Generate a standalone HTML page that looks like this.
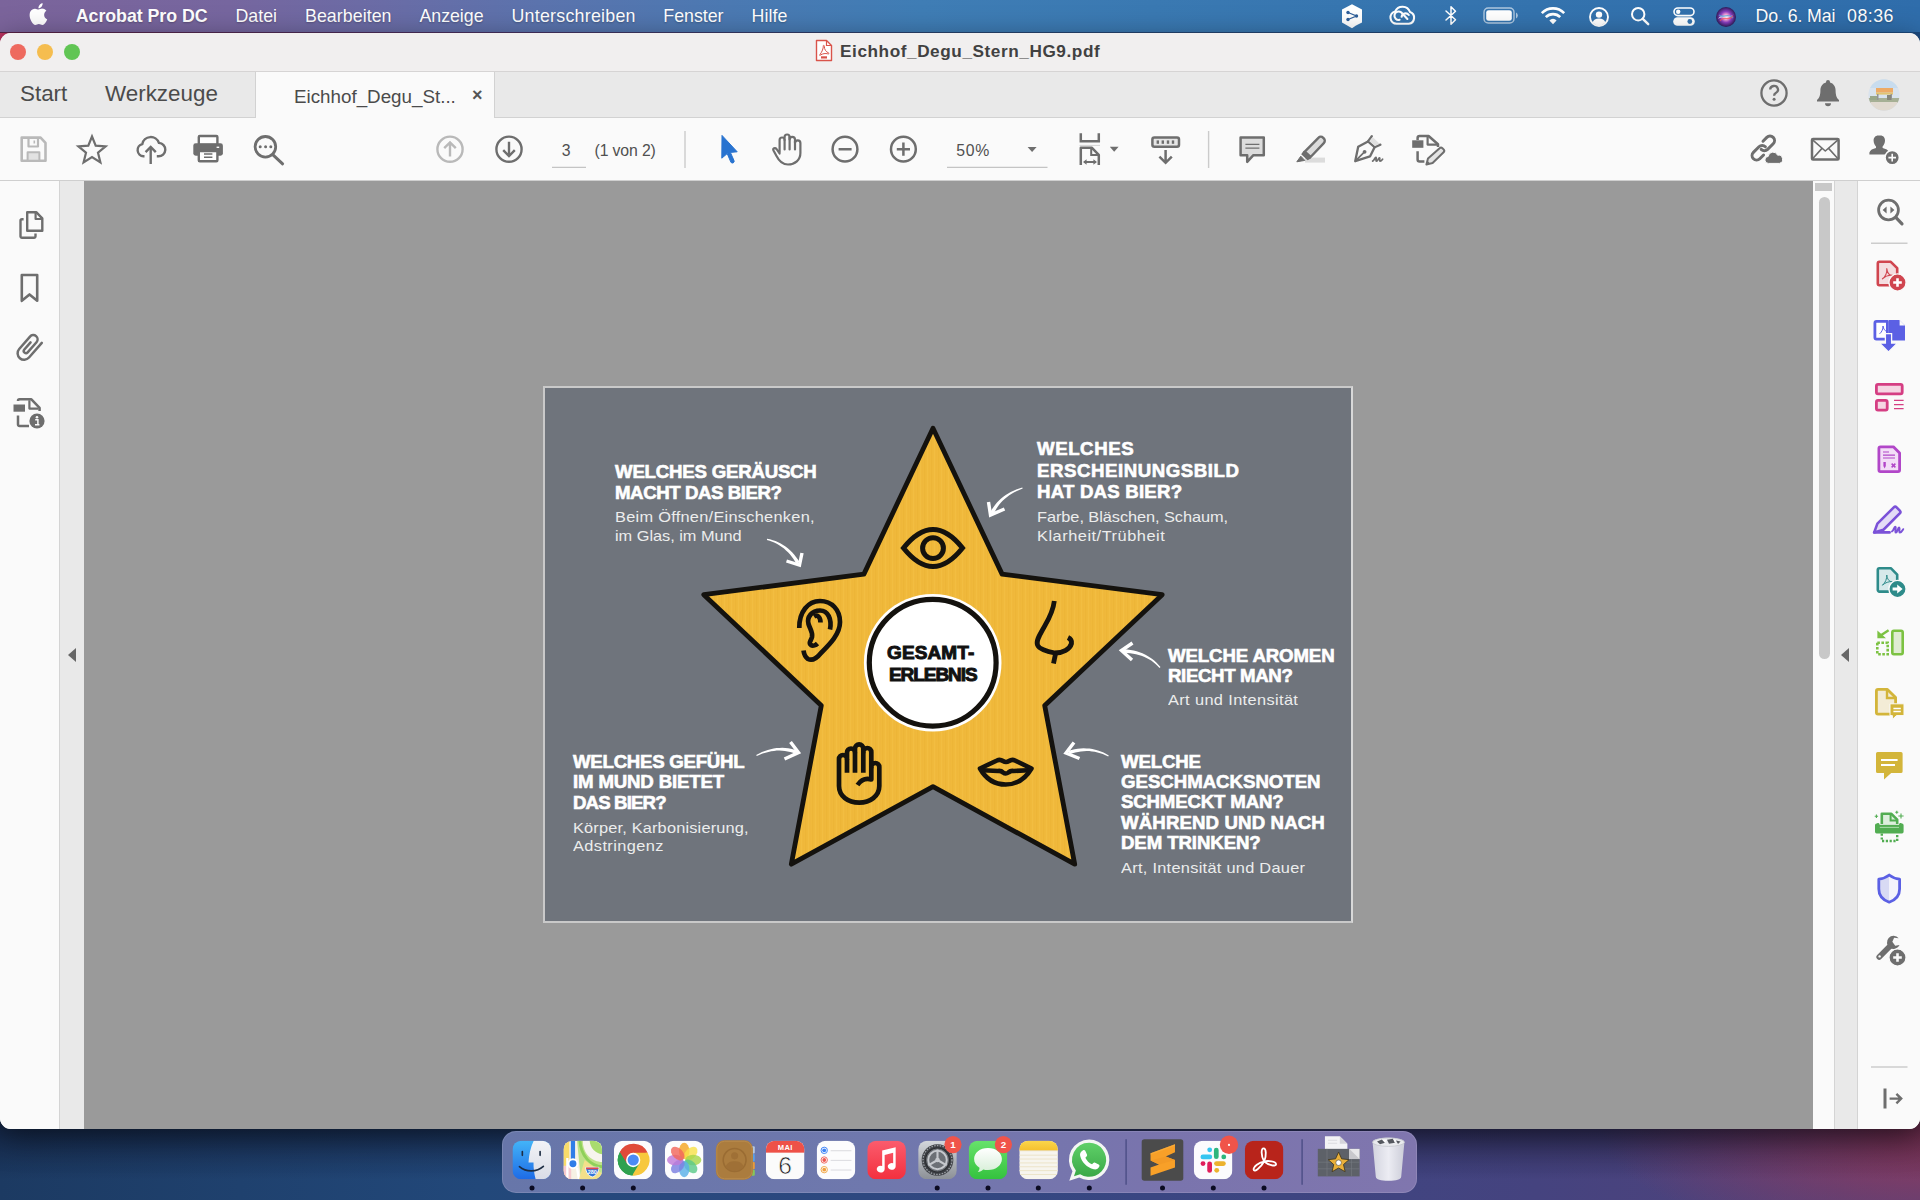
<!DOCTYPE html>
<html lang="de">
<head>
<meta charset="utf-8">
<title>Eichhof_Degu_Stern_HG9.pdf</title>
<style>
*{box-sizing:border-box;margin:0;padding:0}
html,body{width:1920px;height:1200px;overflow:hidden}
body{position:relative;font-family:"Liberation Sans",sans-serif;background:#27436f;}
.abs{position:absolute}
#desk{left:0;top:0;width:1920px;height:1200px;
 background:
  radial-gradient(ellipse 330px 120px at 1930px 1128px,rgba(160,55,85,.85),rgba(160,55,85,0) 100%),
  linear-gradient(90deg,#1c3a62 0%,#22487a 25%,#2e4880 45%,#3a4682 60%,#45437f 80%,#54427a 100%);}
#deskfade{left:0;top:1120px;width:1920px;height:80px;background:linear-gradient(180deg,rgba(10,10,30,.45) 0,rgba(10,10,30,.28) 22px,rgba(10,10,30,0) 60px)}
#menubar{left:0;top:0;width:1920px;height:32px;color:#fff;font-size:17px;
 background:linear-gradient(90deg,#7b649b 0%,#76669f 12%,#6a6ca6 20%,#5b73ad 28%,#4b79b2 38%,#3f7db5 48%,#3a79b2 60%,#3473ae 80%,#2f6dab 100%);}
#menubar span{position:absolute;top:6px;line-height:20px;white-space:nowrap;text-shadow:0 1px 2px rgba(0,0,0,.25)}
#win{left:0;top:33px;width:1920px;height:1096px;border-radius:11px 11px 11px 11px;overflow:hidden;background:#fafafa;box-shadow:0 8px 30px rgba(0,0,0,.5)}
#titlebar{left:0;top:0;width:1920px;height:39px;background:#f1efef;border-bottom:1px solid #d6d4d4}
.tl{position:absolute;top:11px;width:16px;height:16px;border-radius:50%}
#title{left:840px;top:7.8px;font-weight:bold;font-size:17.2px;line-height:20px;color:#414141;white-space:nowrap;letter-spacing:.57px}
#tabbar{left:0;top:39px;width:1920px;height:46px;background:#e9e9e9;border-bottom:1px solid #d2d2d2}
#tabbar .nav{position:absolute;top:7.5px;font-size:22.4px;line-height:28px;color:#4b4b4b;white-space:nowrap}
#tab{left:255px;top:0px;width:240px;height:47px;background:#fafafa;border-left:1px solid #d2d2d2;border-right:1px solid #d2d2d2}
#tab .t{position:absolute;left:38px;top:12.5px;font-size:18.8px;line-height:24px;color:#4b4b4b;white-space:nowrap}
#tab .x{position:absolute;left:216px;top:10.5px;font-size:18px;line-height:24px;color:#555;font-weight:bold}
#toolbar{left:0;top:85px;width:1920px;height:63px;background:#fafafa;border-bottom:1px solid #cfcfcf}
#toolbar .txt{position:absolute;font-size:16px;line-height:20px;color:#505050;white-space:nowrap}
.ic{position:absolute;overflow:visible}
#lside{left:0;top:148px;width:60px;height:948px;background:#fafafa;border-right:1px solid #d4d4d4}
#lstrip{left:60px;top:148px;width:24px;height:948px;background:#e9e9e9}
#doc{left:84px;top:148px;width:1729px;height:948px;background:#9a9a9a}
#vscroll{left:1813px;top:148px;width:21px;height:948px;background:#fafafa}
#rstrip{left:1834px;top:148px;width:24px;height:948px;background:#e9e9e9;border-left:1px solid #d4d4d4;border-right:1px solid #d4d4d4}
#rside{left:1858px;top:148px;width:62px;height:948px;background:#fafafa}
#page{left:543px;top:386px;width:810px;height:537px;background:#6f747c;border:2px solid #c9c9c9;border-right-color:#d8d8d8}
#dock{left:502px;top:1131px;width:915px;height:62px;border-radius:14px;
 background:linear-gradient(90deg,#6776a9 0%,#6f78ad 40%,#7974ad 70%,#8076ae 100%);box-shadow:0 0 0 1px rgba(255,255,255,.12) inset}
.h{position:absolute;font-weight:bold;color:#fff;font-size:17.6px;line-height:20px;white-space:nowrap;transform:scaleX(1.06);transform-origin:0 0;-webkit-text-stroke:.6px #fff}
.s{position:absolute;color:#eceded;font-size:15px;line-height:20px;white-space:nowrap;transform:scaleX(1.09);transform-origin:0 0}
.c{position:absolute;font-weight:bold;color:#111;font-size:17.6px;line-height:20px;white-space:nowrap;transform:scaleX(1.08);transform-origin:0 0;-webkit-text-stroke:.9px #111}
</style>
</head>
<body>
<div id="desk" class="abs"></div>
<div id="deskfade" class="abs"></div>

<!-- MENUBAR -->
<div id="menubar" class="abs">
<svg class="ic" style="left:27.6px;top:2.2px" width="22" height="24" viewBox="1.5 1.5 19 21"><path fill="#fff" d="M15.5 12.6c0-2.3 1.9-3.4 2-3.5-1.1-1.6-2.8-1.8-3.4-1.8-1.4-.1-2.8.8-3.5.8-.7 0-1.9-.8-3.1-.8-1.6 0-3.1.9-3.9 2.4-1.7 2.9-.4 7.2 1.2 9.5.8 1.1 1.7 2.4 3 2.4 1.2 0 1.7-.8 3.1-.8 1.4 0 1.9.8 3.1.8 1.3 0 2.1-1.2 2.9-2.3.9-1.3 1.3-2.6 1.3-2.7-.1 0-2.7-1-2.7-4zM13.2 5.7c.6-.8 1.1-1.9 1-3-.9 0-2.1.6-2.7 1.4-.6.7-1.1 1.8-1 2.9 1 .1 2.1-.5 2.7-1.3z"/></svg>
<span style="left:75.8px;font-size:17.8px;font-weight:bold;letter-spacing:-0.05px">Acrobat Pro DC</span>
<span style="left:235.5px;font-size:17.8px;font-weight:normal;letter-spacing:-0.00px">Datei</span>
<span style="left:305.0px;font-size:17.8px;font-weight:normal;letter-spacing:0.05px">Bearbeiten</span>
<span style="left:419.5px;font-size:17.8px;font-weight:normal;letter-spacing:-0.04px">Anzeige</span>
<span style="left:511.5px;font-size:17.8px;font-weight:normal;letter-spacing:0.26px">Unterschreiben</span>
<span style="left:663.3px;font-size:17.8px;font-weight:normal;letter-spacing:-0.01px">Fenster</span>
<span style="left:751.5px;font-size:17.8px;font-weight:normal;letter-spacing:0.11px">Hilfe</span>
<span style="left:1755.5px;font-size:17.8px;font-weight:normal;letter-spacing:-0.12px">Do. 6. Mai</span>
<span style="left:1847.0px;font-size:17.8px;font-weight:normal;letter-spacing:0.50px">08:36</span>
<svg class="ic" style="left:1340px;top:3px" width="24" height="26" viewBox="0 0 24 26"><path d="M12 1.2 L22 6.6 V19.4 L16 22.6 L12 25.2 L2 19.4 V6.6 Z" fill="#fff"/><g fill="#2f5f9a"><circle cx="8" cy="9.5" r="1.7"/><circle cx="16.5" cy="13" r="1.7"/><circle cx="8" cy="16.5" r="1.7"/></g><path d="M8 9.5 L16.5 13 L8 16.5" fill="none" stroke="#2f5f9a" stroke-width="1.3"/></svg>
<svg class="ic" style="left:1388px;top:6px" width="28" height="20" viewBox="0 0 28 20"><g fill="none" stroke="#fff" stroke-width="2.1" stroke-linecap="round"><path d="M8.6,17.8 a6.300,6.300 0 0 1 -1.400,-12.400 a8,8 0 0 1 14.800,.6 a6.100,6.100 0 0 1 -1.200,11.800 Z" stroke-linejoin="round"/><path d="M11.600,13.800 a4.200,4.200 0 1 1 1.600,-7.400 l6.200,6.600"/><path d="M13.600,10.800 a4,4 0 0 1 7.200,-1.800"/></g></svg>
<svg class="ic" style="left:1444px;top:5px" width="14" height="21" viewBox="0 0 14 21"><path d="M2 6 L11.5 14.8 L7 19.3 V1.7 L11.5 6.2 L2 15" fill="none" stroke="#fff" stroke-width="1.5" stroke-linejoin="round" stroke-linecap="round"/></svg>
<svg class="ic" style="left:1483px;top:7px" width="37" height="17" viewBox="0 0 37 17"><rect x="1" y="1" width="30" height="15" rx="4.2" fill="none" stroke="rgba(255,255,255,.6)" stroke-width="1.4"/><rect x="3.2" y="3.2" width="25.6" height="10.6" rx="2.4" fill="#fff"/><path d="M33 5.6 a3.2 3.2 0 0 1 0 5.8 Z" fill="rgba(255,255,255,.6)"/></svg>
<svg class="ic" style="left:1540px;top:6px" width="26" height="19" viewBox="0 0 26 19"><g fill="none" stroke="#fff" stroke-width="2.6" stroke-linecap="butt"><path d="M1.8 7.2 a15.5 15.5 0 0 1 22.4 0"/><path d="M5.8 11.2 a10 10 0 0 1 14.4 0"/></g><path d="M13 18.2 L9.4 14.4 a5 5 0 0 1 7.2 0 Z" fill="#fff"/></svg>
<svg class="ic" style="left:1588px;top:5.5px" width="22" height="22" viewBox="0 0 22 22"><circle cx="11" cy="11" r="9" fill="none" stroke="#fff" stroke-width="1.9"/><circle cx="11" cy="8.6" r="3.2" fill="#fff"/><path d="M4.6 16.6 a6.6 5.4 0 0 1 12.8 0 a8.6 8.6 0 0 1 -12.8 0Z" fill="#fff"/></svg>
<svg class="ic" style="left:1630px;top:6px" width="20" height="20" viewBox="0 0 20 20"><circle cx="8.2" cy="8.2" r="6.2" fill="none" stroke="#fff" stroke-width="2"/><path d="M12.8 12.8 L18.2 18.2" stroke="#fff" stroke-width="2.4" stroke-linecap="round"/></svg>
<svg class="ic" style="left:1673px;top:7px" width="22" height="19" viewBox="0 0 22 19"><rect x="1" y="1" width="20" height="7.6" rx="3.8" fill="none" stroke="#fff" stroke-width="1.6"/><circle cx="5.2" cy="4.8" r="2.2" fill="#fff"/><rect x=".2" y="10.2" width="21.6" height="8.6" rx="4.3" fill="#fff"/><circle cx="16.8" cy="14.5" r="2.4" fill="#3473ae"/></svg>
<svg class="ic" style="left:1715px;top:5.5px" width="22" height="22" viewBox="0 0 22 22"><defs><radialGradient id="sg" cx=".5" cy=".5" r=".5"><stop offset="0" stop-color="#fff"/><stop offset=".25" stop-color="#f7a6d8"/><stop offset=".55" stop-color="#8a3fc0"/><stop offset="1" stop-color="#2c1c58"/></radialGradient></defs><circle cx="11" cy="11" r="10" fill="url(#sg)"/><path d="M3 13 C7 6 12 14 19 8 C14 14 8 9 3 13Z" fill="#fff" opacity=".85"/><path d="M4 9 C9 13 13 6 18 12" fill="none" stroke="#5ad" stroke-width="1.4" opacity=".8"/><path d="M5 15 C9 9 14 16 18 10" fill="none" stroke="#f55" stroke-width="1.2" opacity=".7"/></svg>

</div>

<div class="abs" style="left:0;top:32px;width:1920px;height:1.4px;background:linear-gradient(90deg,#5a2346 0,#4a3060 25%,#28446f 50%,#1d4a7e 100%)"></div>
<div class="abs" style="left:0;top:33px;width:16px;height:16px;background:linear-gradient(135deg,#c03462 0,#a52a52 60%,#7a2446 100%)"></div>
<div class="abs" style="left:1904px;top:33px;width:16px;height:16px;background:#1d4a80"></div>
<!-- WINDOW -->
<div id="win" class="abs">
 <div id="titlebar" class="abs">
  <div class="tl" style="left:10px;background:#ee6a5f"></div>
  <div class="tl" style="left:37px;background:#f5bd4f"></div>
  <div class="tl" style="left:64px;background:#61c554"></div>
  <svg class="ic" style="left:813.6px;top:5.6px" width="20" height="23" viewBox="0 0 20 23"><path d="M2.5 1.5 H12.5 L17.5 6.5 V21.5 H2.5 Z" fill="#fff" stroke="#d9534a" stroke-width="1.4" stroke-linejoin="round"/><path d="M12.5 1.5 V6.5 H17.5" fill="none" stroke="#d9534a" stroke-width="1.2"/><path d="M6 15.5 C8 13 9.5 9 9.3 7.2 C9 6 10.6 6 10.4 7.6 C10.2 10 12 13 14.4 13.8 C15.6 14.2 15 15.2 13.8 14.8 C11.5 14.2 8.5 14.6 6.6 16 C5.6 16.8 5.2 16.2 6 15.5Z" fill="none" stroke="#d9534a" stroke-width="1"/><rect x="7" y="17.3" width="6" height="2.2" fill="#d9534a"/></svg>

  <div id="title" class="abs">Eichhof_Degu_Stern_HG9.pdf</div>
 </div>
 <div id="tabbar" class="abs">
  <span class="nav" style="left:20px">Start</span>
  <span class="nav" style="left:105px">Werkzeuge</span>
  <div id="tab" class="abs"><span class="t">Eichhof_Degu_St...</span><span class="x">×</span></div>
  <svg class="ic" style="left:1758.7px;top:6.2px" width="30" height="30" viewBox="0 0 30 30"><circle cx="15" cy="15" r="12.6" fill="none" stroke="#6e6e6e" stroke-width="2.3"/><path d="M11.2 11.6 a3.9 3.7 0 1 1 5.6 3.4 c-1.2.7 -1.7 1.3 -1.7 2.8" fill="none" stroke="#6e6e6e" stroke-width="2.3"/><circle cx="15.1" cy="21.2" r="1.5" fill="#6e6e6e"/></svg>
<svg class="ic" style="left:1815px;top:6.4px" width="26" height="30" viewBox="0 0 26 30"><path d="M13 2 a2 2 0 0 1 2 2 v.6 c3.6 1 5.6 4 5.6 8 c0 5 1.2 7.6 3.4 9.4 v1.6 H2 v-1.6 c2.200-1.800 3.400-4.400 3.400-9.400 c0-4 2-7 5.600-8 V4 a2 2 0 0 1 2-2Z M10 25.200 h6 a3 3 0 0 1 -6 0Z" fill="#6e6e6e"/></svg>
<svg class="ic" style="left:1868.4px;top:7.2px" width="32" height="32" viewBox="0 0 32 32"><defs><clipPath id="avc"><circle cx="16" cy="16" r="15.5"/></clipPath></defs><g clip-path="url(#avc)"><rect width="32" height="32" fill="#cfdcea"/><rect y="0" width="32" height="9" fill="#b9d3ea"/><rect y="19" width="32" height="5" fill="#8e9a78"/><rect y="23" width="32" height="9" fill="#d9d0c3"/><rect x="8" y="9" width="17" height="4.600" fill="#e8923a"/><rect x="8" y="13.600" width="17" height="2" fill="#d9b44a"/><rect x="9" y="15" width="1.500" height="6" fill="#777"/><rect x="22.500" y="15" width="1.500" height="6" fill="#777"/><rect x="2" y="17" width="7" height="4" fill="#7d8f6a"/><rect x="19" y="16" width="4" height="5" fill="#665"/><rect width="32" height="32" fill="#fff" opacity=".22"/></g></svg>

 </div>
 <div id="toolbar" class="abs">
  <svg class="abs" style="left:0;top:0" width="1920" height="63" viewBox="0 118 1920 63">
<g fill="none" stroke="#b9b9b9" stroke-width="2.6" stroke-linejoin="round"><path d="M21.7,137.6 H40.6 L45.5,142.8 V160.8 H21.7 Z"/><path d="M28.5,138 V146.5 H38 V138" stroke-width="2.2"/><rect x="27.6" y="152.3" width="11.8" height="8.5" fill="#e2e2e2" stroke-width="2"/><path d="M34.3,140.5 V143.5" stroke-width="1.6"/></g>
<polygon points="92.0,136.5 95.7,145.7 105.6,146.4 98.0,152.7 100.4,162.4 92.0,157.1 83.6,162.4 86.0,152.7 78.4,146.4 88.3,145.7" fill="none" stroke="#6e6e6e" stroke-width="2.2" stroke-linejoin="miter"/>
<g fill="none" stroke="#6e6e6e" stroke-width="2.4" stroke-linecap="butt"><path d="M144.5,156.3 H143.5 a6.2,6.2 0 0 1 -1.2,-12.2 a8.6,8.6 0 0 1 16.6,-1.2 a6.6,6.6 0 0 1 -0.6,13.4 H156.8"/><path d="M150.7,164 V148"/><path d="M145.6,152.2 L150.7,147 L155.8,152.2" stroke-linejoin="miter"/></g>
<g><rect x="198.8" y="136" width="18.6" height="9" fill="#fff" stroke="#6e6e6e" stroke-width="2.4" rx="1"/><rect x="193.3" y="143.3" width="29.6" height="12.4" rx="2.4" fill="#6e6e6e"/><rect x="198.8" y="151" width="18.6" height="10.2" fill="#fff" stroke="#6e6e6e" stroke-width="2.4" rx="1"/><path d="M204,154 H212.4 M204,157.2 H212.4" stroke="#6e6e6e" stroke-width="1.5"/><rect x="216.6" y="146.6" width="2.6" height="1.4" fill="#fff"/></g>
<g><circle cx="265.4" cy="146.8" r="10.3" fill="none" stroke="#6e6e6e" stroke-width="2.8"/><path d="M273,154.8 L282.6,163.8" stroke="#6e6e6e" stroke-width="3" stroke-linecap="round"/><circle cx="260.2" cy="146.8" r="1.5" fill="#6e6e6e"/><circle cx="265.6" cy="146.8" r="1.5" fill="#6e6e6e"/><circle cx="270.8" cy="146.8" r="1.5" fill="#6e6e6e"/></g>
<g fill="none" stroke="#b9b9b9" stroke-width="2.4"><circle cx="450" cy="149.2" r="12.6"/><path d="M450,156.6 V142.6 M444.2,148.2 L450,142.4 L455.8,148.2"/></g>
<g fill="none" stroke="#6e6e6e" stroke-width="2.4"><circle cx="509" cy="149.2" r="12.6"/><path d="M509,141.8 V155.8 M503.2,150.2 L509,156 L514.8,150.2"/></g>
<path d="M552,167.4 H586" stroke="#c4c4c4" stroke-width="1.2"/>
<path d="M685,131 V168" stroke="#cbcbcb" stroke-width="1.4"/>
<path d="M722,135.4 L721.8,158.2 L727.2,153.6 L730.8,162 a1.6,1.6 0 0 0 3.2,-1.4 L730.4,152.4 L737.2,151.8 Z" fill="#2873d0" stroke="#2873d0" stroke-width="1" stroke-linejoin="round"/>
<g fill="none" stroke="#6e6e6e" stroke-width="2.2" stroke-linecap="round" stroke-linejoin="round"><path d="M779.6,152.5 V140 a2.5,2.5 0 0 1 5,0 V137 a2.5,2.5 0 0 1 5,0 V139.5 a2.7,2.7 0 0 1 5.400,0 V143 a2.700,2.700 0 0 1 5.400,0 V153 C800.400,160 795,164.500 788,164.500 C782,164.500 779,161 776.500,156 L773.500,150.500 C772.500,148.500 775,147 776.500,149 L779.600,153.5"/><path d="M784.600,140 V149.500 M789.600,137 V149.500 M795,141 V149.500"/></g>
<g fill="none" stroke="#6e6e6e" stroke-width="2.5"><circle cx="845" cy="149.2" r="12.4"/><path d="M838.600,149.200 H851.600"/><circle cx="903.4" cy="149.2" r="12.4"/><path d="M896.8,149.2 H910 M903.4,142.600 V155.800"/></g>
<path d="M947,167.400 H1047.500" stroke="#c4c4c4" stroke-width="1.2"/>
<path d="M1027.6,147 H1036.6 L1032.100,152 Z" fill="#6e6e6e"/>
<g fill="none" stroke="#6e6e6e" stroke-width="2.5"><path d="M1080.800,133.300 V141.300 H1098.800 V133.300"/><path d="M1080.800,165 V147.700 H1091.700 L1098.800,154.800 V165" stroke-linejoin="round"/><path d="M1091.200,148 V155 H1098.500" stroke-width="2"/><path d="M1084.200,162 H1095.800" stroke-width="1.8"/></g><path d="M1083,162 L1086.600,159.200 V164.800 Z M1097,162 L1093.400,159.200 V164.800 Z" fill="#6e6e6e"/><path d="M1079.500,145.400 H1100" stroke="#d4d4d4" stroke-width="1"/>
<path d="M1109.800,146.800 H1118.600 L1114.200,151.800 Z" fill="#6e6e6e"/>
<g fill="none" stroke="#6e6e6e" stroke-width="2.5"><rect x="1152.400" y="137.400" width="26.600" height="9.400" rx="2" fill="#e6e6e6"/><path d="M1165.600,150 V162.400 M1159.400,156.600 L1165.600,162.800 L1171.800,156.600"/></g><g fill="#6e6e6e"><rect x="1156.600" y="140.400" width="2.400" height="3.400"/><rect x="1161.600" y="140.400" width="2.400" height="3.400"/><rect x="1166.800" y="140.400" width="2.400" height="3.400"/><rect x="1171.800" y="140.400" width="2.400" height="3.400"/></g>
<path d="M1208.600,131 V168" stroke="#cbcbcb" stroke-width="1.400"/>
<g><path d="M1240.600,137.500 H1263.800 V155.200 H1253.400 L1247.200,161.800 V155.200 H1240.600 Z" fill="#dcdcdc" stroke="#6e6e6e" stroke-width="2.500" stroke-linejoin="round"/><path d="M1245.400,144.400 H1259.400 M1245.400,148.200 H1259.400" stroke="#6e6e6e" stroke-width="1.300"/></g>
<g><rect x="1305" y="157.600" width="20" height="5" fill="#dcdcdc"/><path d="M1304.800,151.600 L1318.400,137.800 a3.400,3.400 0 0 1 4.800,0 l.6,.6 a3.400,3.400 0 0 1 0,4.800 L1310.600,157 Z" fill="#dcdcdc" stroke="#6e6e6e" stroke-width="2.400" stroke-linejoin="round"/><path d="M1303.600,150.800 L1311.200,158.200 L1307.600,160.200 L1301.200,154.200 Z" fill="#6e6e6e"/><path d="M1300.800,156.200 L1304.800,160.400 L1296.800,161.800 Z" fill="#6e6e6e" stroke="#6e6e6e" stroke-width="1" stroke-linejoin="round"/></g>
<g fill="none" stroke="#6e6e6e" stroke-width="2.300" stroke-linejoin="round" stroke-linecap="round"><path d="M1355.200,161.200 L1358.200,146.800 L1368,141.400 L1374.600,147.200 L1370,156.400 Z"/><path d="M1368,141.400 L1371.800,136.200 M1374.600,147.200 L1380.400,144.600"/><path d="M1356,160.400 L1364,152.400" stroke-width="1.600"/><path d="M1372.600,161.200 c1.500,-.3 2.200,-3.800 3.200,-3.800 c1.200,0 -.6,3.800 .8,3.800 c1.200,0 1.800,-3.400 2.800,-3.400 c1,0 -.4,3.400 .8,3.400 c.8,0 1.800,-1.200 2.400,-2" stroke-width="1.700"/></g><circle cx="1364.600" cy="151.800" r="1.900" fill="#6e6e6e"/><path d="M1372.600,137 L1379.600,143.800 L1375,146 L1369.400,141.200 Z" fill="#e0e0e0"/>
<g fill="none" stroke="#6e6e6e" stroke-width="2.500" stroke-linejoin="round"><path d="M1417.600,140 V138 a2,2 0 0 1 2,-2 H1428.600 L1438,144.200 V147"/><path d="M1427.600,136.400 V144.600 H1437.400" stroke-width="2.200"/><path d="M1417.600,151.200 V159.600 a2,2 0 0 0 2,2 H1424.400"/></g><rect x="1412.200" y="140.300" width="11.200" height="7.500" fill="#6e6e6e"/><g><path d="M1439.600,148.200 a2,2 0 0 1 2.800,0 l1.200,1.200 a2,2 0 0 1 0,2.800 L1432.600,163 L1426.400,164.600 L1428,158.600 Z" fill="#e4e4e4" stroke="#6e6e6e" stroke-width="2" stroke-linejoin="round"/><path d="M1426.400,164.600 L1427.400,160.800 L1430.200,163.600 Z" fill="#6e6e6e"/></g>
<g fill="none" stroke="#6e6e6e" stroke-width="3" stroke-linecap="round"><path d="M1763,141.200 l3.800,-3.800 a4.500,4.500 0 0 1 6.400,6.400 l-5.600,5.600 a4.500,4.500 0 0 1 -6.400,0"/><path d="M1765.400,146.800 a4.500,4.500 0 0 0 -6.400,0 l-5.600,5.600 a4.500,4.500 0 0 0 6.400,6.400 l3.800,-3.800"/></g><path d="M1768.600,163.400 a3.500,3.500 0 0 1 -.4,-7 a4.900,4.900 0 0 1 9.400,-1.200 a4.200,4.200 0 0 1 1.800,8.200 Z" fill="#6e6e6e" stroke="#fafafa" stroke-width="1"/>
<g fill="none" stroke="#6e6e6e" stroke-width="2.500" stroke-linejoin="round"><rect x="1812" y="139" width="26.600" height="20.400" rx="1"/><path d="M1812.600,139.800 L1825.300,151 L1838,139.800 M1812.600,158.800 L1822,148.400 M1838,158.800 L1828.600,148.400" stroke-width="1.600"/></g>
<g fill="#6e6e6e"><path d="M1880.400,135.400 c3,0 4.600,2.200 4.600,5.200 c0,2.400 -1,4.600 -2.400,5.800 v1.600 c3,.8 6,2 6.600,4.600 v2 H1869.400 v-2 c.6,-2.600 3.600,-3.800 6.600,-4.600 v-1.600 c-1.400,-1.200 -2.400,-3.400 -2.400,-5.800 c0,-3 1.800,-5.200 4.600,-5.200 Z"/><circle cx="1892.200" cy="157.600" r="7.200" stroke="#fafafa" stroke-width="1.600"/></g><path d="M1888.400,157.600 H1896 M1892.200,153.800 V161.400" stroke="#fafafa" stroke-width="1.600"/>
</svg>
<span class="txt" style="left:561.8px;top:23.0px;font-size:15.8px;letter-spacing:-0.40px;color:#505050">3</span>
<span class="txt" style="left:594.6px;top:23.1px;font-size:15.8px;letter-spacing:-0.14px;color:#505050">(1 von 2)</span>
<span class="txt" style="left:956.2px;top:23.0px;font-size:15.8px;letter-spacing:0.69px;color:#505050">50%</span>

 </div>
 <div id="lside" class="abs">
  <svg class="abs" style="left:0;top:0" width="60" height="948" viewBox="0 181 60 948">
<g fill="none" stroke="#6e6e6e" stroke-width="2.4" stroke-linejoin="round"><path d="M27.2,212.2 H36.2 L42.3,218.4 V230.800 H27.2 Z" fill="#fafafa"/><path d="M35.600,212.600 V219 H42" stroke-width="2.2"/><path d="M23.600,219.200 H22 a1.500,1.500 0 0 0 -1.500,1.500 V236.300 a1.500,1.500 0 0 0 1.500,1.500 H34 a1.500,1.500 0 0 0 1.500,-1.500 V233.400"/></g>
<path d="M21.800,275 H37.200 V300.800 L29.500,294.400 L21.800,300.800 Z" fill="none" stroke="#6e6e6e" stroke-width="2.600" stroke-linejoin="round"/>
<g transform="translate(28.7,348) rotate(-49)"><path d="M12.500,6.500 H-7 a6.500,6.500 0 0 1 0,-13 H9.500 a4.300,4.300 0 0 1 0,8.600 H-4 a2.200,2.200 0 0 1 0,-4.400 H5.500" fill="none" stroke="#6e6e6e" stroke-width="2.500" stroke-linecap="round"/></g>
<g fill="none" stroke="#6e6e6e" stroke-width="2.500" stroke-linejoin="round"><path d="M18,401 V400.800 a1.500,1.500 0 0 1 1.500,-1.500 H31.400 L39.600,407.800 V411"/><path d="M29.400,400.200 V408.600 H38.600" stroke-width="2.200"/><path d="M18,415.600 V424.600 a1.500,1.500 0 0 0 1.500,1.500 H29"/></g><rect x="13.500" y="404.500" width="11.500" height="7.200" fill="#6e6e6e"/><circle cx="37" cy="421" r="7.600" fill="#6e6e6e"/><circle cx="37" cy="417.200" r="1.300" fill="#fafafa"/><path d="M35.200,419.800 H37.900 V424.600 M35,424.800 H39.400" stroke="#fafafa" stroke-width="1.500" fill="none"/>
</svg>

 </div>
 <div id="lstrip" class="abs"><svg class="ic" style="left:7px;top:466px" width="10" height="16"><path d="M9 1 L1 8 L9 15 Z" fill="#676767"/></svg></div>
 <div id="doc" class="abs"></div>
 <div id="vscroll" class="abs">
  <div class="abs" style="left:2px;top:2px;width:17px;height:8px;background:#c8c8c8"></div>
  <div class="abs" style="left:5.5px;top:16px;width:11px;height:462px;border-radius:6px;background:#c8c8c8"></div>
 </div>
 <div id="rstrip" class="abs"><svg class="ic" style="left:5px;top:466px" width="10" height="16"><path d="M9 1 L1 8 L9 15 Z" fill="#676767"/></svg></div>
 <div id="rside" class="abs">
  <svg class="abs" style="left:0;top:0" width="62" height="948" viewBox="1858 181 62 948">
<g><circle cx="1888.500" cy="210" r="9.900" fill="none" stroke="#6e6e6e" stroke-width="2.800"/><path d="M1896,217.600 L1902,223.800" stroke="#6e6e6e" stroke-width="3.200" stroke-linecap="round"/><path d="M1882.600,210 L1886.600,206.400 V213.600 Z M1894.400,210 L1890.400,206.400 V213.600 Z" fill="#6e6e6e"/></g>
<path d="M1871,243.200 H1907.500" stroke="#cccccc" stroke-width="1.400"/>
<g><path d="M1877.800,263.400 a1.600,1.600 0 0 1 1.600,-1.600 H1890.800 L1897.200,268.200 V285.200 H1879.400 a1.600,1.600 0 0 1 -1.600,-1.600 Z" fill="#f4dde0" stroke="#d0454f" stroke-width="2.600" stroke-linejoin="round"/><path d="M1882.400,278.800 C1885.400,276.600 1887,272 1886.800,268.600 C1887.200,272.600 1889,275.400 1892.400,275.400 C1888.800,274.800 1885.400,276.200 1882.400,278.800 Z" fill="none" stroke="#d0454f" stroke-width="1.100" stroke-linejoin="round"/><circle cx="1897.500" cy="282.500" r="8.600" fill="#d0454f" stroke="#fafafa" stroke-width="1.400"/><path d="M1893.200,282.500 H1901.800 M1897.500,278.200 V286.800" stroke="#fff" stroke-width="2.600"/></g>
<g><path d="M1874.900,323 a1.600,1.600 0 0 1 1.600,-1.600 H1887.400 V339.200 H1876.500 a1.600,1.600 0 0 1 -1.600,-1.600 Z" fill="#fff" stroke="#5b60e4" stroke-width="2.800" stroke-linejoin="round"/><path d="M1888.800,320 H1899.400 L1905,325.600 V340.600 H1888.800 Z" fill="#5b60e4"/><path d="M1899.600,320 V325.400 H1905 Z" fill="#fafafa"/><path d="M1879.600,333.800 C1882,332 1883.200,328.600 1883,326 C1883.400,329 1884.800,331 1887,331.200" fill="none" stroke="#5b60e4" stroke-width="1"/><path d="M1885.400,333.600 H1891.600 V343 H1897.600 L1888.500,352 L1879.400,343 H1885.400 Z" fill="#5b60e4" stroke="#fafafa" stroke-width="1.300"/></g>
<g fill="#f5d6e3" stroke="#d53e83" stroke-width="2.800"><rect x="1876.400" y="384.400" width="25.800" height="9.400" rx="1.600"/><rect x="1876.400" y="400.400" width="10.800" height="9.800" rx="1.600"/></g><path d="M1894,400.400 H1903.600 M1894,404.600 H1903.600 M1894,408.600 H1903.600" stroke="#d53e83" stroke-width="1.400"/>
<g><path d="M1878.900,448.400 a1.600,1.600 0 0 1 1.600,-1.600 H1893.400 L1899.600,453 V470 a1.600,1.600 0 0 1 -1.600,1.600 H1880.500 a1.600,1.600 0 0 1 -1.600,-1.600 Z" fill="#f3ddf7" stroke="#b146c8" stroke-width="2.800" stroke-linejoin="round"/><path d="M1883,452 H1889 M1883,455.200 H1895 M1883,458 H1895" stroke="#b146c8" stroke-width="1.200"/><path d="M1883.400,462 h2.400 v4 l-1.200,2.600 l-1.200,-2.600 Z" fill="#b146c8"/><path d="M1891.600,463.600 l3.800,3.800 m0,-3.800 l-3.800,3.800" stroke="#b146c8" stroke-width="1.500"/></g>
<g fill="none" stroke="#7b52d8" stroke-width="2.600" stroke-linejoin="round" stroke-linecap="round"><path d="M1874.200,532.400 L1877.400,523.600 L1893.800,507.400 a2,2 0 0 1 2.800,0 l3.200,3.200 a2,2 0 0 1 0,2.800 L1883.400,529.800 Z" fill="#e4dcf6"/><path d="M1874.200,532.400 H1889.600"/><path d="M1883.400,529.400 L1899,513.800" stroke-width="1.600"/><path d="M1892,531.400 c1.600,-.6 2,-4.600 3.200,-4.600 c1.400,0 -.8,5.800 .8,5.800 c1.400,0 1.800,-5 3,-5 c1.200,0 -.4,5 1,5 c1.400,0 2.400,-2.200 3.200,-3.400" stroke-width="2"/></g>
<g><path d="M1877.800,569.800 a1.600,1.600 0 0 1 1.600,-1.600 H1890.800 L1897.200,574.600 V591.600 H1879.400 a1.600,1.600 0 0 1 -1.600,-1.600 Z" fill="#d6e9ea" stroke="#2e8b8a" stroke-width="2.600" stroke-linejoin="round"/><path d="M1882.400,585.200 C1885.400,583 1887,578.400 1886.800,575 C1887.200,579 1889,581.800 1892.400,581.800 C1888.800,581.200 1885.400,582.600 1882.400,585.200 Z" fill="none" stroke="#2e8b8a" stroke-width="1" stroke-linejoin="round"/><circle cx="1897.500" cy="589" r="8.600" fill="#2e8b8a" stroke="#fafafa" stroke-width="1.400"/><path d="M1892.600,587.400 H1897.200 V584.600 L1902.600,589 L1897.200,593.400 V590.600 H1892.600 Z" fill="#fff"/></g>
<g><rect x="1892.300" y="630.800" width="10.400" height="23.400" rx="1.600" fill="#dfecd2" stroke="#7cc242" stroke-width="2.600"/><rect x="1877.300" y="642.800" width="10.400" height="11.400" fill="none" stroke="#7cc242" stroke-width="2.600" stroke-dasharray="2.600 1.500"/><path d="M1888.600,630.200 L1880.600,635.600" stroke="#7cc242" stroke-width="2.400"/><path d="M1877.400,630.600 V638.200 H1886 Z" fill="#7cc242"/></g>
<g><path d="M1876.400,691 a1.600,1.600 0 0 1 1.600,-1.600 H1887.400 L1895.600,697.600 V714.200 H1878 a1.600,1.600 0 0 1 -1.600,-1.600 Z" fill="#f3ecd6" stroke="#d3b53a" stroke-width="2.800" stroke-linejoin="round"/><path d="M1887,690 V698 H1895" fill="none" stroke="#d3b53a" stroke-width="2.400"/><path d="M1890,703.800 H1904 V715.600 H1896.400 L1892.400,719.400 V715.600 H1890 Z" fill="#d3b53a" stroke="#fafafa" stroke-width="1"/><path d="M1893.400,708.400 H1900.800 M1893.400,711.400 H1900.800" stroke="#fff" stroke-width="1.500"/></g>
<g><path d="M1876,753.600 a1.600,1.600 0 0 1 1.600,-1.600 H1901 a1.600,1.600 0 0 1 1.600,1.600 V771.400 a1.600,1.600 0 0 1 -1.600,1.600 H1891.200 L1884,779.600 V773 H1877.600 a1.600,1.600 0 0 1 -1.600,-1.600 Z" fill="#d3b53a"/><path d="M1881,760 H1897.600 M1881,765 H1895" stroke="#fff" stroke-width="2.200"/></g>
<g><path d="M1881.800,824 V813.800 H1891.400 L1897.200,819.600 V824" fill="#dcefdc" stroke="#52ad52" stroke-width="2.600" stroke-linejoin="round"/><path d="M1890.600,814.400 V820.400 H1896.600" fill="none" stroke="#52ad52" stroke-width="2"/><path d="M1876.600,823.400 a1.800,1.800 0 0 1 3,1.400 H1899 a1.800,1.800 0 0 1 3,-1.400 a1.800,1.800 0 0 1 1.600,1.800 V831.800 a1.800,1.800 0 0 1 -1.600,1.800 H1876.600 a1.800,1.800 0 0 1 -1.600,-1.800 V825.200 a1.800,1.800 0 0 1 1.600,-1.800 Z" fill="#52ad52"/><path d="M1879.800,827.400 H1899" stroke="#a8dca8" stroke-width="1"/><path d="M1881.800,833.600 V841 H1897.200 V833.600" fill="none" stroke="#52ad52" stroke-width="2.400" stroke-dasharray="2.200 1.600"/><path d="M1876.400,814.600 v3.400 m-1.700,-1.700 h3.400 M1901,813.400 v5.200 m-2.600,-2.600 h5.200 M1896.800,810.800 v3 m-1.500,-1.500 h3" stroke="#52ad52" stroke-width="1.100"/></g>
<g><path d="M1889.200,875 C1885.600,877.800 1882.400,878.800 1878.800,879.200 V889 C1878.800,896 1883.400,900.200 1889.200,902.200 Z" fill="#d8daf4"/><path d="M1889.200,875 C1892.800,877.800 1896,878.800 1899.600,879.200 V889 C1899.600,896 1895,900.200 1889.200,902.200 Z" fill="#f3f3fc"/><path d="M1889.200,875 C1885.600,877.800 1882.400,878.800 1878.800,879.200 V889 C1878.800,896 1883.400,900.200 1889.200,902.200 C1895,900.200 1899.600,896 1899.600,889 V879.200 C1896,878.800 1892.800,877.800 1889.200,875 Z" fill="none" stroke="#5b60e4" stroke-width="2.800" stroke-linejoin="round"/></g>
<g><path d="M1879.200,957 L1890.600,945.600" stroke="#6e6e6e" stroke-width="5.600" stroke-linecap="round"/><path d="M1898.200,937.600 a6.600,6.600 0 1 0 1.800,6.600 l-4.200,1.200 l-3.400,-3.400 l1.200,-4.200 Z" fill="#6e6e6e" transform="rotate(8 1893.500 941.500)"/><circle cx="1879.600" cy="956.400" r="1.200" fill="#fafafa"/><circle cx="1897.500" cy="957.500" r="8.600" fill="#6e6e6e" stroke="#fafafa" stroke-width="1.400"/><path d="M1893.200,957.500 H1901.800 M1897.500,953.200 V961.800" stroke="#fafafa" stroke-width="2.600"/></g>
<path d="M1871,1067 H1907.500" stroke="#cccccc" stroke-width="1.400"/>
<g stroke="#6e6e6e" fill="none"><path d="M1885,1088.600 V1108.600" stroke-width="3"/><path d="M1889.600,1098.600 H1900.800 M1896.400,1093.800 L1901.200,1098.600 L1896.400,1103.400" stroke-width="2.400"/></g>
</svg>

 </div>
</div>

<!-- PDF PAGE -->
<div id="page" class="abs"></div>
<svg class="abs" style="left:0;top:0" width="1920" height="1200" viewBox="0 0 1920 1200">
<defs>
<pattern id="wood" width="7" height="40" patternUnits="userSpaceOnUse">
<rect width="7" height="40" fill="#f0b93b"/>
<rect x="0" width="1.2" height="40" fill="#e9b033" opacity=".4"/>
<rect x="3" width="1" height="40" fill="#f4c24a" opacity=".45"/>
<rect x="5" width=".8" height="40" fill="#ebb236" opacity=".35"/>
</pattern>
</defs>
<polygon points="933.0,428.2 1002.1,574.1 1162.2,594.7 1044.7,705.5 1074.7,864.2 933.0,786.7 791.3,864.2 821.3,705.5 703.8,594.7 863.9,574.1" fill="url(#wood)" stroke="#14120e" stroke-width="4.8" stroke-linejoin="round"/>
<circle cx="932.7" cy="662.7" r="68.8" fill="#fff"/>
<circle cx="932.7" cy="662.7" r="63.4" fill="#fff" stroke="#14120e" stroke-width="5.2"/>
<g fill="none" stroke="#14120e" stroke-linecap="butt" stroke-linejoin="round">
<!-- eye -->
<path d="M903.5,548 Q933,511 962.5,548 Q933,585 903.5,548 Z" stroke-width="5" stroke-linejoin="miter"/>
<circle cx="933" cy="548.2" r="10.4" stroke-width="5"/>
<!-- ear -->
<g stroke-width="4.7">
<path d="M799.3,628 C799,612 808,601 820,601 C832,601 840,610 840,622 C840,634 830,644 821,653 C817,658 812,661 808,659 C805,657 804,654 803.5,650.5"/>
<path d="M830,629.5 C832,619 828,610.5 820,610.5 C812,610.5 806.5,617 808.5,624 C810,629 813,632 812,637 C811,641 808,643 811,645 C813,646.5 816,645 817.5,643.5"/>
<path d="M814,616.5 C817,614.5 820.5,616.5 820.5,622.5"/>
</g>
<!-- nose -->
<g stroke-width="4.8">
<path d="M1054.3,601 C1053,613 1047,622 1043,629 C1039,636 1036,641 1037.5,645 C1039,649 1046,651 1055,653 C1063,653 1070,649 1071.5,643.5 C1072,640 1070,638.5 1068,637.5"/>
<path d="M1055.7,653 L1053.5,663.5"/>
</g>
<!-- hand -->
<g stroke-width="4.7">
<path d="M839,786 V759 a4,4 0 0 1 8,0 V752.5 a4,4 0 0 1 8,0 V748.5 a4.15,4.15 0 0 1 8.3,0 V752 a4,4 0 0 1 8,0 V767 a4,4 0 0 1 8,0 V786 C879.3,796 870,802.7 859.3,802.7 C848,802.7 839,796 839,786 Z"/>
<path d="M847,759 V772.7 M855,752.5 V772.7 M863.3,752 V772.7 M871.3,767 V779.5 C866,778 861,780 857.5,785"/>
</g>
<!-- lips -->
<g stroke-width="4.6">
<path d="M980,768.5 L997,760.5 Q1000,759 1003,761 Q1006,763 1009,761 Q1012,759 1015,760.5 L1031.5,768.5 Q1022,784.5 1005.7,784.5 Q989,784.5 980,768.5 Z"/>
<path d="M983,770.3 L998,771 Q1001,770.5 1003,772.5 Q1005.7,774.5 1008.5,772.5 Q1010.5,770.5 1013.5,771 L1028.5,770.3"/>
</g>
</g>
<path d="M766.9,539.9 L769.6,540.7 L772.3,541.7 L774.8,542.8 L777.2,544.0 L779.6,545.4 L781.8,546.9 L784.0,548.6 L786.0,550.4 L788.0,552.3 L789.9,554.3 L791.6,556.5 L793.3,558.8 L794.9,561.3 L796.4,563.9 L799.6,562.1 L797.9,559.4 L796.0,556.9 L794.1,554.5 L792.1,552.3 L790.0,550.2 L787.8,548.3 L785.5,546.6 L783.1,545.0 L780.7,543.5 L778.1,542.3 L775.5,541.1 L772.8,540.2 L770.0,539.3 L767.1,538.7Z" fill="#fff"/>
<path d="M802.0,553.0 L799.5,565.0 L786.5,561.0" fill="none" stroke="#fff" stroke-width="3.4" stroke-linejoin="miter" stroke-linecap="butt"/>
<path d="M1022.3,487.4 L1019.2,488.4 L1016.3,489.5 L1013.5,490.7 L1010.7,492.0 L1008.2,493.5 L1005.7,495.1 L1003.3,496.8 L1001.1,498.6 L999.0,500.6 L997.0,502.6 L995.2,504.8 L993.4,507.2 L991.8,509.6 L990.3,512.2 L993.7,513.8 L994.9,511.4 L996.2,509.0 L997.7,506.7 L999.3,504.6 L1001.0,502.5 L1002.9,500.6 L1004.9,498.7 L1007.1,497.0 L1009.3,495.3 L1011.7,493.8 L1014.3,492.3 L1016.9,491.0 L1019.8,489.7 L1022.7,488.6Z" fill="#fff"/>
<path d="M988.5,502.0 L990.5,515.0 L1004.5,509.0" fill="none" stroke="#fff" stroke-width="3.4" stroke-linejoin="miter" stroke-linecap="butt"/>
<path d="M1160.5,667.1 L1158.6,664.9 L1156.6,662.8 L1154.5,660.8 L1152.3,659.0 L1150.0,657.4 L1147.6,655.9 L1145.0,654.5 L1142.4,653.3 L1139.6,652.2 L1136.7,651.3 L1133.7,650.5 L1130.6,649.9 L1127.4,649.5 L1124.1,649.2 L1123.9,652.8 L1127.1,653.0 L1130.1,653.2 L1133.1,653.7 L1136.0,654.2 L1138.7,654.9 L1141.4,655.8 L1144.0,656.8 L1146.5,657.9 L1148.9,659.2 L1151.2,660.6 L1153.4,662.2 L1155.5,664.0 L1157.6,665.9 L1159.5,667.9Z" fill="#fff"/>
<path d="M1132.5,643.0 L1121.5,650.5 L1132.0,660.0" fill="none" stroke="#fff" stroke-width="3.4" stroke-linejoin="miter" stroke-linecap="butt"/>
<path d="M1108.8,755.4 L1106.2,753.9 L1103.5,752.6 L1100.8,751.4 L1098.0,750.5 L1095.2,749.7 L1092.4,749.1 L1089.5,748.6 L1086.6,748.4 L1083.6,748.3 L1080.6,748.4 L1077.6,748.7 L1074.6,749.2 L1071.5,749.9 L1068.4,750.7 L1069.6,754.3 L1072.5,753.3 L1075.3,752.5 L1078.1,751.9 L1080.9,751.4 L1083.7,751.2 L1086.5,751.0 L1089.3,751.1 L1092.0,751.4 L1094.7,751.8 L1097.5,752.4 L1100.2,753.2 L1102.8,754.1 L1105.5,755.2 L1108.2,756.6Z" fill="#fff"/>
<path d="M1074.0,742.5 L1066.0,753.0 L1079.5,758.5" fill="none" stroke="#fff" stroke-width="3.4" stroke-linejoin="miter" stroke-linecap="butt"/>
<path d="M756.8,756.1 L759.7,754.8 L762.6,753.6 L765.5,752.7 L768.4,751.9 L771.2,751.3 L774.0,750.9 L776.7,750.6 L779.5,750.5 L782.2,750.7 L784.9,750.9 L787.5,751.4 L790.2,752.0 L792.8,752.8 L795.4,753.7 L796.6,750.3 L793.8,749.4 L790.9,748.7 L788.1,748.2 L785.2,747.9 L782.3,747.8 L779.4,747.9 L776.5,748.1 L773.6,748.6 L770.7,749.2 L767.8,750.0 L764.9,750.9 L762.0,752.1 L759.1,753.4 L756.2,754.9Z" fill="#fff"/>
<path d="M790.5,742.0 L798.5,752.5 L784.5,759.0" fill="none" stroke="#fff" stroke-width="3.4" stroke-linejoin="miter" stroke-linecap="butt"/>
</svg>
<div class="h" style="left:615.0px;top:462.2px;letter-spacing:-0.21px">WELCHES GERÄUSCH</div>
<div class="h" style="left:615.0px;top:483.2px;letter-spacing:-0.41px">MACHT DAS BIER?</div>
<div class="s" style="left:615.0px;top:507.3px;letter-spacing:0.25px">Beim Öffnen/Einschenken,</div>
<div class="s" style="left:615.0px;top:525.5px;letter-spacing:-0.03px">im Glas, im Mund</div>
<div class="h" style="left:1036.7px;top:439.3px;letter-spacing:0.53px">WELCHES</div>
<div class="h" style="left:1036.7px;top:460.6px;letter-spacing:0.51px">ERSCHEINUNGSBILD</div>
<div class="h" style="left:1036.7px;top:482.0px;letter-spacing:0.19px">HAT DAS BIER?</div>
<div class="s" style="left:1036.7px;top:507.3px;letter-spacing:-0.06px">Farbe, Bläschen, Schaum,</div>
<div class="s" style="left:1036.7px;top:525.5px;letter-spacing:0.48px">Klarheit/Trübheit</div>
<div class="h" style="left:1167.6px;top:645.5px;letter-spacing:-0.12px">WELCHE AROMEN</div>
<div class="h" style="left:1167.6px;top:665.5px;letter-spacing:-0.34px">RIECHT MAN?</div>
<div class="s" style="left:1167.6px;top:690.2px;letter-spacing:0.34px">Art und Intensität</div>
<div class="h" style="left:1120.9px;top:751.6px;letter-spacing:-0.15px">WELCHE</div>
<div class="h" style="left:1120.9px;top:772.1px;letter-spacing:-0.03px">GESCHMACKSNOTEN</div>
<div class="h" style="left:1120.9px;top:792.4px;letter-spacing:-0.16px">SCHMECKT MAN?</div>
<div class="h" style="left:1120.9px;top:812.7px;letter-spacing:0.11px">WÄHREND UND NACH</div>
<div class="h" style="left:1120.9px;top:832.7px;letter-spacing:-0.10px">DEM TRINKEN?</div>
<div class="s" style="left:1120.9px;top:858.2px;letter-spacing:0.26px">Art, Intensität und Dauer</div>
<div class="h" style="left:572.5px;top:751.6px;letter-spacing:-0.25px">WELCHES GEFÜHL</div>
<div class="h" style="left:572.5px;top:772.1px;letter-spacing:-0.16px">IM MUND BIETET</div>
<div class="h" style="left:572.5px;top:792.6px;letter-spacing:-0.82px">DAS BIER?</div>
<div class="s" style="left:572.5px;top:817.6px;letter-spacing:0.16px">Körper, Karbonisierung,</div>
<div class="s" style="left:572.5px;top:835.7px;letter-spacing:0.37px">Adstringenz</div>
<div class="c" style="left:887.2px;top:643.4px;letter-spacing:0.10px">GESAMT-</div>
<div class="c" style="left:888.5px;top:664.7px;letter-spacing:-0.99px">ERLEBNIS</div>


<!-- DOCK -->
<div id="dock" class="abs">
<svg class="abs" style="left:0;top:0;overflow:visible" width="915" height="62" viewBox="502 1131 915 62" font-family="Liberation Sans, sans-serif">
<defs>
<clipPath id="sq"><rect width="40" height="40" rx="9.2"/></clipPath>
<linearGradient id="fblue" x1="0" y1="0" x2="0" y2="1"><stop offset="0" stop-color="#43b4f8"/><stop offset="1" stop-color="#1e6be6"/></linearGradient>
<linearGradient id="fwht" x1="0" y1="0" x2="0" y2="1"><stop offset="0" stop-color="#f2f3f7"/><stop offset="1" stop-color="#d9dce6"/></linearGradient>
<linearGradient id="mus" x1="0" y1="0" x2="0" y2="1"><stop offset="0" stop-color="#fb5c6d"/><stop offset="1" stop-color="#f3303f"/></linearGradient>
<linearGradient id="msg" x1="0" y1="0" x2="0" y2="1"><stop offset="0" stop-color="#67e26b"/><stop offset="1" stop-color="#34c23e"/></linearGradient>
<linearGradient id="ntop" x1="0" y1="0" x2="0" y2="1"><stop offset="0" stop-color="#fbd64b"/><stop offset="1" stop-color="#f5c02d"/></linearGradient>
<linearGradient id="sys" x1="0" y1="0" x2="0" y2="1"><stop offset="0" stop-color="#d4d7dc"/><stop offset="1" stop-color="#8c9096"/></linearGradient>
<linearGradient id="wa" x1="0" y1="0" x2="0" y2="1"><stop offset="0" stop-color="#5fd068"/><stop offset="1" stop-color="#3aa847"/></linearGradient>
<linearGradient id="tr" x1="0" y1="0" x2="1" y2="0"><stop offset="0" stop-color="#d9dbe2"/><stop offset=".5" stop-color="#f4f5f8"/><stop offset="1" stop-color="#d2d4dc"/></linearGradient>
<linearGradient id="bub" x1="0" y1="0" x2="0" y2="1"><stop offset="0" stop-color="#ffffff"/><stop offset="1" stop-color="#d7efd8"/></linearGradient>
</defs>
<g transform="translate(512.5,1140.7) scale(0.9650)"><g clip-path="url(#sq)"><rect width="40" height="40" fill="url(#fblue)"/><path d="M22,0 C18.500,7 17,15 16.600,22.500 H21.800 C21.600,28 22.400,34 24,40 H40 V0 Z" fill="url(#fwht)"/><path d="M10.200,11.200 V15.200 M28.600,11.200 V15.200" stroke="#1d2d44" stroke-width="1.700" stroke-linecap="round"/><path d="M7.200,26.800 C14,32.800 25,32.800 32,26.600" fill="none" stroke="#1d2d44" stroke-width="1.700" stroke-linecap="round"/></g></g>
<g transform="translate(563.5,1140.7) scale(0.9650)"><g clip-path="url(#sq)"><rect width="40" height="40" fill="#f6f1e4"/><path d="M14,0 H40 V40 H18 Z" fill="#bfe28a"/><path d="M20,0 C20,14 30,22 40,22 V0 Z" fill="#f7f4ee"/><path d="M27,0 C28,8 33,13 40,14 V0 Z" fill="#a9dc6e"/><path d="M17,0 C18,16 28,26 40,27" fill="none" stroke="#8fd05a" stroke-width="3"/><path d="M0,0 H6 V40 H0 Z" fill="#f9dc6a"/><path d="M0,26 H8 V40 H0Z" fill="#f7c9cf"/><path d="M14,28 L16,40 M4,18 V40" stroke="#fff" stroke-width="2.400"/><path d="M16,40 L22,20 L40,34 V40 Z" fill="#f8e08a" opacity=".9"/><path d="M9.800,0 V22" stroke="#2f7de8" stroke-width="4.400"/><circle cx="9.800" cy="23.800" r="5.600" fill="#fff"/><circle cx="9.800" cy="23.800" r="3.600" fill="#2f7de8"/><path d="M23,27.600 H36.600 C36.600,33 33.500,36.400 29.800,37.600 C26.100,36.400 23,33 23,27.600 Z" fill="#3576d8" stroke="#fff" stroke-width=".9"/><path d="M23.400,27.800 H36.200 V29.600 H23.400Z" fill="#e2474f"/><text x="29.800" y="35" font-size="5.600" font-weight="bold" fill="#fff" text-anchor="middle">280</text></g></g>
<g transform="translate(613.9,1140.7) scale(0.9650)"><g clip-path="url(#sq)"><rect width="40" height="40" fill="#fbfbfd"/><path d="M20.00,20.00 L6.14,12.00 A16.00,16.00 0 0 1 33.86,12.00 Z" fill="#e04a3a"/><path d="M20.00,20.00 L33.86,12.00 A16.00,16.00 0 0 1 20.00,36.00 Z" fill="#f7c83e"/><path d="M20.00,20.00 L20.00,36.00 A16.00,16.00 0 0 1 6.14,12.00 Z" fill="#2fa14f"/><path d="M20,12.600 H35 A16,16 0 0 0 6.140,12 L13.600,24.600 Z" fill="#e04a3a"/><path d="M26.400,23.700 L18.900,36 A16,16 0 0 0 35,12.600 H20 Z" fill="#f7c83e"/><path d="M13.600,23.700 L6.140,12 A16,16 0 0 0 18.900,36 L26.400,23.700 Z" fill="#2fa14f"/><circle cx="20" cy="20" r="7.400" fill="#fff"/><circle cx="20" cy="20" r="5.800" fill="#4c8bf5"/></g></g>
<g transform="translate(664.9,1140.7) scale(0.9650)"><g clip-path="url(#sq)"><rect width="40" height="40" fill="#fcfcfd"/><ellipse cx="20" cy="10.600" rx="5.400" ry="8.400" fill="#f5a623" opacity=".82" transform="rotate(0 20 20)"/><ellipse cx="20" cy="10.600" rx="5.400" ry="8.400" fill="#f8e04a" opacity=".82" transform="rotate(45 20 20)"/><ellipse cx="20" cy="10.600" rx="5.400" ry="8.400" fill="#a6d64a" opacity=".82" transform="rotate(90 20 20)"/><ellipse cx="20" cy="10.600" rx="5.400" ry="8.400" fill="#5cc98a" opacity=".82" transform="rotate(135 20 20)"/><ellipse cx="20" cy="10.600" rx="5.400" ry="8.400" fill="#5ab0e8" opacity=".82" transform="rotate(180 20 20)"/><ellipse cx="20" cy="10.600" rx="5.400" ry="8.400" fill="#7b7fe0" opacity=".82" transform="rotate(225 20 20)"/><ellipse cx="20" cy="10.600" rx="5.400" ry="8.400" fill="#c07ad8" opacity=".82" transform="rotate(270 20 20)"/><ellipse cx="20" cy="10.600" rx="5.400" ry="8.400" fill="#f2665c" opacity=".82" transform="rotate(315 20 20)"/></g></g>
<g transform="translate(715.9,1140.3) scale(0.9850)"><g><rect x="35.500" y="6" width="4" height="7.500" rx="1" fill="#b5c7de"/><rect x="35.500" y="14" width="4" height="7.500" rx="1" fill="#5aa0e8"/><rect x="35.500" y="22" width="4" height="7.500" rx="1" fill="#e89a3c"/><rect x="35.500" y="30" width="4" height="6" rx="1" fill="#86c75a"/><rect width="37.600" height="40" rx="8.600" fill="#ab7c3e"/><rect x="1" y="1" width="35.600" height="38" rx="7.800" fill="none" stroke="#b98a4a" stroke-width="1"/><circle cx="19" cy="20" r="11.600" fill="none" stroke="#9a6c33" stroke-width="1.600"/><circle cx="19" cy="15.800" r="3.600" fill="#9f7036"/><path d="M9.800,27 C11.500,22 15,21.200 19,21.200 C23,21.200 26.500,22 28.200,27 C24,32.400 14,32.400 9.800,27Z" fill="#9f7036"/></g></g>
<g transform="translate(765.9,1140.7) scale(0.9650)"><g clip-path="url(#sq)"><rect width="40" height="40" fill="#fbfbfb"/><rect width="40" height="12.400" fill="#ee5148"/><text x="20" y="9.800" font-size="7.800" font-weight="bold" fill="#fff" text-anchor="middle" letter-spacing=".3">MAI</text><text x="20" y="34.600" font-size="25.500" fill="#1c1c1e" stroke="#fbfbfb" stroke-width=".7" text-anchor="middle">6</text></g></g>
<g transform="translate(816.7,1140.7) scale(0.9650)"><g clip-path="url(#sq)"><rect width="40" height="40" fill="#fcfcfd"/><circle cx="7.800" cy="10" r="3.300" fill="#fff" stroke="#3b82f6" stroke-width="1"/><circle cx="7.800" cy="10" r="2" fill="#3b82f6"/><circle cx="7.800" cy="20" r="3.300" fill="#fff" stroke="#ef6a62" stroke-width="1"/><circle cx="7.800" cy="20" r="2" fill="#ef5a52"/><circle cx="7.800" cy="30" r="3.300" fill="#fff" stroke="#f0a848" stroke-width="1"/><circle cx="7.800" cy="30" r="2" fill="#f0a040"/><path d="M14.500,10.400 H36 M14.500,20.400 H36 M14.500,30.400 H36" stroke="#d6d6da" stroke-width=".9"/></g></g>
<g transform="translate(867.3,1140.7) scale(0.9650)"><g clip-path="url(#sq)"><rect width="40" height="40" fill="url(#mus)"/><path d="M15.400,10.200 L29.400,6.800 V26.600 a4.100,3.500 0 1 1 -2.600,-3.200 V12.600 L18,14.800 V29.400 a4.100,3.500 0 1 1 -2.600,-3.200 Z" fill="#fff"/></g></g>
<g transform="translate(918.2,1140.7) scale(0.9650)"><g clip-path="url(#sq)"><rect width="40" height="40" fill="url(#sys)"/><circle cx="20" cy="20" r="16.400" fill="#3c3f44"/><circle cx="20" cy="20" r="15" fill="none" stroke="#9b9ea4" stroke-width="1.400" stroke-dasharray="1.600 1.300"/><circle cx="20" cy="20" r="12.400" fill="#6c7076" stroke="#2b2d31" stroke-width="1.200"/><circle cx="20" cy="20" r="9.600" fill="none" stroke="#c5c8cd" stroke-width="2"/><path d="M20,20 L29.5,25.5" stroke="#c5c8cd" stroke-width="2.200"/><path d="M20,20 L10.5,25.5" stroke="#c5c8cd" stroke-width="2.200"/><path d="M20,20 L20.0,9.0" stroke="#c5c8cd" stroke-width="2.200"/><circle cx="20" cy="20" r="2.400" fill="#c5c8cd"/></g></g>
<g transform="translate(968.7,1140.7) scale(0.9650)"><g clip-path="url(#sq)"><rect width="40" height="40" fill="url(#msg)"/><path d="M20,7.600 C28.400,7.600 34.400,12.600 34.400,19 C34.400,25.400 28.400,30.400 20,30.400 C18.200,30.400 16.600,30.200 15,29.800 C13.600,31.200 11.600,32.200 9.400,32.400 C10.600,31.200 11.200,29.600 11.200,28 C7.800,26 5.600,22.800 5.600,19 C5.600,12.600 11.600,7.600 20,7.600 Z" fill="url(#bub)"/></g></g>
<g transform="translate(1019.3,1140.7) scale(0.9650)"><g clip-path="url(#sq)"><rect width="40" height="40" fill="#f7f5ee"/><rect width="40" height="10.400" fill="url(#ntop)"/><path d="M0,15 H40 M0,19 H40 M0,23 H40 M0,27 H40 M0,31 H40 M0,35 H40" stroke="#ebe3c8" stroke-width="1"/><path d="M0,10.400 H40" stroke="#e8dfc0" stroke-width=".8"/></g></g>
<g transform="translate(1068.0,1138.7) scale(1.0650)"><g><path d="M20,0.800 A19,19 0 1 1 10.600,36.400 L1.200,39.400 L4.200,30.600 A19,19 0 0 1 20,0.800 Z" fill="#f4f6f4"/><path d="M20,3.800 A16,16 0 1 1 11.400,33.400 L5.600,35.200 L7.400,29.800 A16,16 0 0 1 20,3.800 Z" fill="url(#wa)"/><path d="M14.200,10.800 C15,10.400 15.800,10.600 16.200,11.400 L17.800,14.800 C18.100,15.500 17.900,16.200 17.400,16.700 L16.300,17.800 C17.600,20.600 19.800,22.800 22.600,24 L23.700,22.900 C24.200,22.400 24.900,22.300 25.500,22.600 L28.800,24.300 C29.600,24.700 29.800,25.500 29.400,26.200 C28.400,28.200 26.400,29.400 24.200,28.800 C17.600,27 13,22.200 11.400,16 C10.900,13.900 12.200,11.700 14.200,10.800 Z" fill="#fff"/></g></g>
<path d="M1126.100,1139.200 V1184.700 M1302.100,1139.200 V1184.700" stroke="#4e5088" stroke-width="1.500"/>
<g transform="translate(1141.7,1139.2) scale(1.0400)"><g><rect width="40" height="40" rx="2.600" fill="#4b4b4b"/><path d="M8.500,13.400 L32,4.900 V12.600 L23.100,16.700 L32,19.900 V27.100 L8.500,35.200 V27.100 L16.700,24.300 L8.500,20.600 Z" fill="#f8a028"/><path d="M8.500,20.600 L23.100,16.700 L32,19.900 L16.700,24.300 Z" fill="#f39a26"/><path d="M8.500,13.400 L32,4.900 V6.400 L8.500,14.900 Z" fill="#fbb040" opacity=".6"/></g></g>
<g transform="translate(1193.8,1140.7) scale(0.9650)"><g clip-path="url(#sq)"><rect width="40" height="40" fill="#fbfbfd"/>
<g stroke-linecap="round" stroke-width="4.900" fill="none">
<path d="M9.400,16.850 H16.600" stroke="#36c5f0"/><path d="M16.400,9.500 H16.500" stroke="#36c5f0"/>
<path d="M23.300,9.700 V16.600" stroke="#2eb67d"/><path d="M31,16.850 H31.100" stroke="#2eb67d"/>
<path d="M23.500,23.700 H30.700" stroke="#ecb22e"/><path d="M23.700,30.700 H23.800" stroke="#ecb22e"/>
<path d="M16.400,24 V30.800" stroke="#e01e5a"/><path d="M9.500,23.700 H9.600" stroke="#e01e5a"/>
</g></g></g>
<g transform="translate(1244.8,1140.7) scale(0.9650)"><g clip-path="url(#sq)"><rect width="40" height="40" fill="#b8241b"/><g fill="none" stroke="#fff" stroke-width="1.900" stroke-linejoin="round"><path d="M20,21.600 C16.400,15 17,8 19.500,8 C22,8 22.800,15 20,21.600 Z"/><path d="M20,21.600 C15,22 8.600,27.400 9.200,30.200 C9.900,33 16.400,28 20,21.600 Z"/><path d="M20,21.600 C24,20.400 32,21.400 32.400,24.200 C32.700,27 25,25.800 20,21.600 Z"/></g></g></g>
<g transform="translate(1317.8,1136.2) scale(1.0200)"><g><path d="M7,0 H21.600 L29,7.400 V16 H7 Z" fill="#f3f3f5"/><path d="M21.600,0 V7.400 H29 Z" fill="#d5d5da"/><path d="M10,4 H19 M10,7 H19" stroke="#dcdce0" stroke-width="1"/><rect x="0" y="12.400" width="41" height="27" fill="#5d6168"/><rect x="30.800" y="12.400" width="10.200" height="10" fill="#e8e8ea"/><path d="M30.800,12.400 L41,22.400 H30.800 Z" fill="#c8c8cc"/><path d="M0,25.500 H41 M0,32 H41 M9,12.400 V39.400 M33,22.400 V39.400" stroke="#777b82" stroke-width=".6"/><path d="M20.400,15.600 L23.400,22.200 L30.600,23 L25.200,27.800 L26.800,34.800 L20.400,31.200 L14,34.800 L15.600,27.800 L10.200,23 L17.400,22.200 Z" fill="#e9b03a" stroke="#3b341f" stroke-width=".8"/><circle cx="20.400" cy="26" r="2.700" fill="#fff" stroke="#333" stroke-width=".5"/></g></g>
<g transform="translate(1371,1136.800)"><g><path d="M1.600,5.400 C1.600,2.600 9.600,1 17.500,1 C25.400,1 33.400,2.600 33.400,5.400 L30.200,40 C30,42.600 25.400,44 17.500,44 C9.600,44 5,42.600 4.800,40 Z" fill="url(#tr)" opacity=".93"/><ellipse cx="17.500" cy="5.400" rx="15.900" ry="4.200" fill="#e9eaee" stroke="#c4c6ce" stroke-width=".8"/><path d="M6,4.600 L11,2.600 L14,6 L9,7.400 Z M16,3 L22,2 L24,6 L18,7 Z M25,3.600 L29.600,4.600 L27,7.200 Z" fill="#55585f"/><path d="M11,2.600 L16,3 L14,6 Z M22,2 L25,3.600 L24,6Z" fill="#fbfbfc"/></g></g>
<circle cx="953.0" cy="1144.6" r="8.6" fill="#f0544a"/><text x="953.0" y="1148.1" font-size="9.800" font-weight="bold" fill="#fff" text-anchor="middle">1</text>
<circle cx="1003.4" cy="1144.6" r="8.6" fill="#f0544a"/><text x="1003.4" y="1148.1" font-size="9.800" font-weight="bold" fill="#fff" text-anchor="middle">2</text>
<circle cx="1229.0" cy="1144.7" r="9.2" fill="#f0544a"/>
<circle cx="1229" cy="1144.900" r="1.100" fill="#fff"/>
<circle cx="532.0" cy="1187.900" r="2.500" fill="#0b0b22"/>
<circle cx="582.6" cy="1187.900" r="2.500" fill="#0b0b22"/>
<circle cx="633.3" cy="1187.900" r="2.500" fill="#0b0b22"/>
<circle cx="937.2" cy="1187.900" r="2.500" fill="#0b0b22"/>
<circle cx="988.0" cy="1187.900" r="2.500" fill="#0b0b22"/>
<circle cx="1038.3" cy="1187.900" r="2.500" fill="#0b0b22"/>
<circle cx="1089.3" cy="1187.900" r="2.500" fill="#0b0b22"/>
<circle cx="1162.5" cy="1187.900" r="2.500" fill="#0b0b22"/>
<circle cx="1213.3" cy="1187.900" r="2.500" fill="#0b0b22"/>
<circle cx="1264.0" cy="1187.900" r="2.500" fill="#0b0b22"/>
</svg>

</div>
</body>
</html>
